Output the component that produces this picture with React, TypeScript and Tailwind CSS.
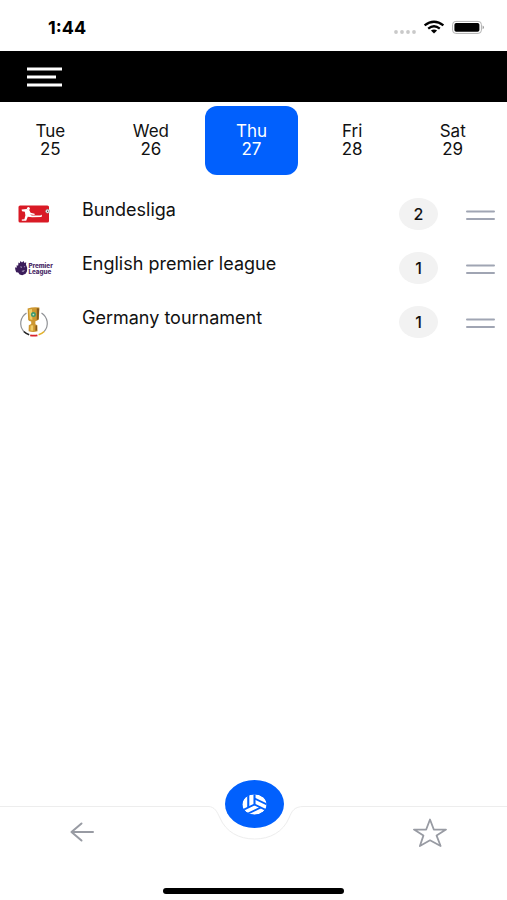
import { useState } from 'react';

const days = [
  { name: 'Tue', date: 25 },
  { name: 'Wed', date: 26 },
  { name: 'Thu', date: 27 },
  { name: 'Fri', date: 28 },
  { name: 'Sat', date: 29 },
];

const leagues = [
  { name: 'Bundesliga', matches: 2, logo: <BundesligaLogo /> },
  { name: 'English premier league', matches: 1, logo: <PremierLeagueLogo /> },
  { name: 'Germany tournament', matches: 1, logo: <CupLogo /> },
];

function BundesligaLogo() {
  return (
    <svg width="32" height="18" viewBox="0 0 32 18" aria-hidden="true">
      <rect x="0.5" y="0.5" width="30.5" height="17" rx="1.6" fill="#d91a25" />
      <circle cx="10.4" cy="3.6" r="1.5" fill="#fff" />
      <path
        d="M3.6 4.6l5-.6 2.8 1.2 1.2 2.6 4 1v1.2l-4.6-.6 1.8 1.2h8.8l.4-.8.9.3-.3 2-9.4.2-4.4-.6-1.6 4H3.8v-1.2l2.6-.2 1-4-.6-3.6-2.8-.4z"
        fill="#fff"
      />
      <circle cx="29.6" cy="6.2" r="2" fill="#f4f4f4" stroke="#888" strokeWidth="0.5" />
      <path d="M29 5.600l1.300.200-.200 1.200-1.100.100z" fill="#555" />
    </svg>
  );
}

function PremierLeagueLogo() {
  return (
    <svg width="40" height="18" viewBox="0 0 40 18" aria-hidden="true">
      <path
        d="M4.400 3.600L5.800 4.200 6.400 2l1.600 1.400L9.600 2l.8 2L12.200 3.200l-.2 2.600 1.200 3-.2 3.400-1.400 2.600-3.400 1.400-2.600-.8-1.400-1.800-2-.4-.8-2.200L1 8.400l2 .2-.6-2.200 1.800.2z"
        fill="#3b1d5a"
      />
      <path d="M6 7.400l2.200.4-1 1.200zM9.800 7.200l1.600.2-1.200 1zM7.400 12l3.600-1-1.800 2z" fill="#b9aecb" />
      <text x="14.400" y="8.600" fontFamily="Inter, sans-serif" fontSize="6.300" fontWeight="800" fill="#4b2a68">
        Premier
      </text>
      <text x="14.400" y="14.600" fontFamily="Inter, sans-serif" fontSize="6.300" fontWeight="800" fill="#4b2a68">
        League
      </text>
    </svg>
  );
}

function CupLogo() {
  return (
    <svg width="30" height="32" viewBox="0 0 30 32" fill="none" aria-hidden="true">
      <path d="M7.500 7A13.800 12.800 0 0 0 4.800 25.500" stroke="#8f9195" strokeWidth="1.200" />
      <path d="M22.500 7A13.800 12.800 0 0 1 25.200 25.500" stroke="#8f9195" strokeWidth="1.200" />
      <path d="M4.800 25.500q2.200 2.200 5.400 3.200" stroke="#222" strokeWidth="1.600" />
      <path d="M11.200 29.300q3.800.8 7.200 0" stroke="#d8232a" strokeWidth="1.800" />
      <path d="M19.600 28.800q3.400-1.100 5.600-3.300" stroke="#e3b22c" strokeWidth="1.600" />
      <path
        d="M8.600 2.400q6-1.800 11.800-.8L19.800 13.600q-1.400 1.400-3.400 1.600v3l2 1 .2 6q-4.200 1.600-9 0l.2-6 2.400-1.200v-2.600q-2.200-.2-3-1.400z"
        fill="#cd9730"
      />
      <path d="M10 3.600l3-.6.4 11-2.600-.8zM11.600 19.600l2.600-.4v5.600l-2.800-.2z" fill="#f0cd68" />
      <path d="M17.800 2.200l2.400.2-.6 10.800-1.800.8zM16.600 19.400l1.400.2v5l-1.600.2z" fill="#85591b" />
      <circle cx="14.400" cy="8.600" r="2.500" fill="#3f9a6e" />
      <circle cx="14.400" cy="8.600" r="0.900" fill="#cfe6c4" />
    </svg>
  );
}

function StatusIcons() {
  return (
    <svg width="92" height="16" viewBox="0 0 92 16" fill="none" aria-hidden="true">
      <g fill="#c9c9c9">
        <circle cx="4" cy="12" r="1.9" />
        <circle cx="10" cy="12" r="1.9" />
        <circle cx="16" cy="12" r="1.9" />
        <circle cx="22" cy="12" r="1.9" />
      </g>
      <g stroke="#000" strokeWidth="2.3">
        <path d="M32.6 5.4q9.4-7.4 18.800 0" />
        <path d="M36.200 8.600q5.800-4.600 11.600 0" />
      </g>
      <path d="M38.900 10.600q3.100-2 6.200 0L42 13.400z" fill="#000" />
      <rect x="60.600" y="1.400" width="28.800" height="12" rx="3.200" stroke="#b0b0b0" strokeWidth="1" />
      <rect x="62.400" y="3" width="25" height="8.800" rx="1.800" fill="#000" />
      <path d="M90.600 5.600q1.400.6 1.400 1.800t-1.400 1.800z" fill="#999" />
    </svg>
  );
}

function VolleyballIcon() {
  return (
    <svg width="25" height="21" viewBox="0 0 24 24" preserveAspectRatio="none" aria-hidden="true">
      <defs>
        <clipPath id="ball">
          <circle cx="12" cy="12" r="11.600" />
        </clipPath>
      </defs>
      <g clipPath="url(#ball)">
        <circle cx="12" cy="12" r="11.600" fill="#fff" />
        <g stroke="#0160fd" strokeWidth="2" fill="none">
          <path d="M12 0v12l12 6.930M12 12L0 18.930" />
          <path d="M6 0v15.460" />
          <path d="M12 5.070L24 12" />
          <path d="M18 15.460L6 22.400" />
        </g>
      </g>
    </svg>
  );
}

export default function App() {
  const [activeDate, setActiveDate] = useState(27);

  return (
    <div className="flex min-h-screen flex-col bg-white font-['Inter',sans-serif] text-[#111111]">
      {/* Status bar */}
      <div className="flex h-[51px] items-center justify-between pt-1 pr-[23px] pl-12">
        <span className="text-lg font-bold text-black">1:44</span>
        <StatusIcons />
      </div>

      <header className="flex h-[51px] items-center bg-black px-[27px]">
        <button type="button" aria-label="Open menu">
          <svg width="35" height="20" viewBox="0 0 35 20" fill="#fff" aria-hidden="true">
            <rect y="0.5" width="35" height="3" />
            <rect y="8.5" width="29" height="3" />
            <rect y="16.5" width="35" height="3" />
          </svg>
        </button>
      </header>

      {/* Day picker */}
      <nav className="grid grid-cols-5 pt-1 pr-1">
        {days.map((day) => (
          <button
            key={day.date}
            type="button"
            onClick={() => setActiveDate(day.date)}
            className={`mx-1 flex h-[69px] flex-col items-center rounded-xl pt-4 text-[17px] leading-[18px] ${
              day.date === activeDate ? 'bg-[#0160fd] text-white' : ''
            }`}
          >
            <span>{day.name}</span>
            <span>{day.date}</span>
          </button>
        ))}
      </nav>

      <main className="flex-1 pt-3">
        <ul>
          {leagues.map((league) => (
            <li key={league.name} className="flex h-[54px] items-center gap-7 pr-3 pl-[14px]">
              <div className="flex w-10 shrink-0 justify-center">{league.logo}</div>
              <span className="flex-1 pb-2 text-lg leading-6">{league.name}</span>
              <span className="flex h-8 w-[39px] items-center justify-center rounded-[50%] bg-[#f2f2f2] text-base font-medium">
                {league.matches}
              </span>
              <button type="button" aria-label={`Reorder ${league.name}`}>
                <svg width="29" height="14" viewBox="0 0 29 14" aria-hidden="true">
                  <path d="M1 4.500h27M1 12h27" stroke="#a0a5b3" strokeWidth="2" strokeLinecap="round" />
                </svg>
              </button>
            </li>
          ))}
        </ul>
      </main>

      {/* Bottom navigation */}
      <footer>
        <div className="grid h-[82px] grid-cols-[1fr_100px_1fr]">
          <div className="flex justify-center border-t border-[#ededed] pr-10">
            <button type="button" aria-label="Back" className="h-[50px]">
              <svg width="24" height="20" viewBox="0 0 24 20" fill="none" aria-hidden="true">
                <path
                  d="M11.500 1.500L1.500 10l10 8.500M1.500 10H23"
                  stroke="#989ba3"
                  strokeWidth="2"
                  strokeLinecap="round"
                  strokeLinejoin="round"
                />
              </svg>
            </button>
          </div>
          <div className="relative">
            <svg width="100" height="36" viewBox="0 0 100 36" fill="none" aria-hidden="true">
              <path
                d="M0 .5H4C11 .5 13 6 16 12C22 26 35 33 50.500 33C66 33 79 26 85 12C88 5 90 .5 100 .5"
                stroke="#ededed"
              />
            </svg>
            <button
              type="button"
              aria-label="Matches"
              className="absolute -top-[26px] left-[21px] flex h-12 w-[59px] items-center justify-center rounded-[50%] bg-[#0160fd]"
            >
              <VolleyballIcon />
            </button>
          </div>
          <div className="flex justify-center border-t border-[#ededed] pl-[50px]">
            <button type="button" aria-label="Favourites" className="h-[52px]">
              <svg width="34" height="30" viewBox="0 0 34 30" fill="none" aria-hidden="true">
                <path
                  d="M17 1.500L20.800 11.500L33 11.600L23.600 17.600L27.600 28L17 22.300L6.900 28L10.400 17.600L1 11.600L13.200 11.500Z"
                  stroke="#989ba3"
                  strokeWidth="1.800"
                  strokeLinejoin="round"
                />
              </svg>
            </button>
          </div>
        </div>
        <div className="flex h-3 justify-center">
          <div className="h-[6px] w-[181px] rounded-full bg-black" />
        </div>
      </footer>
    </div>
  );
}
